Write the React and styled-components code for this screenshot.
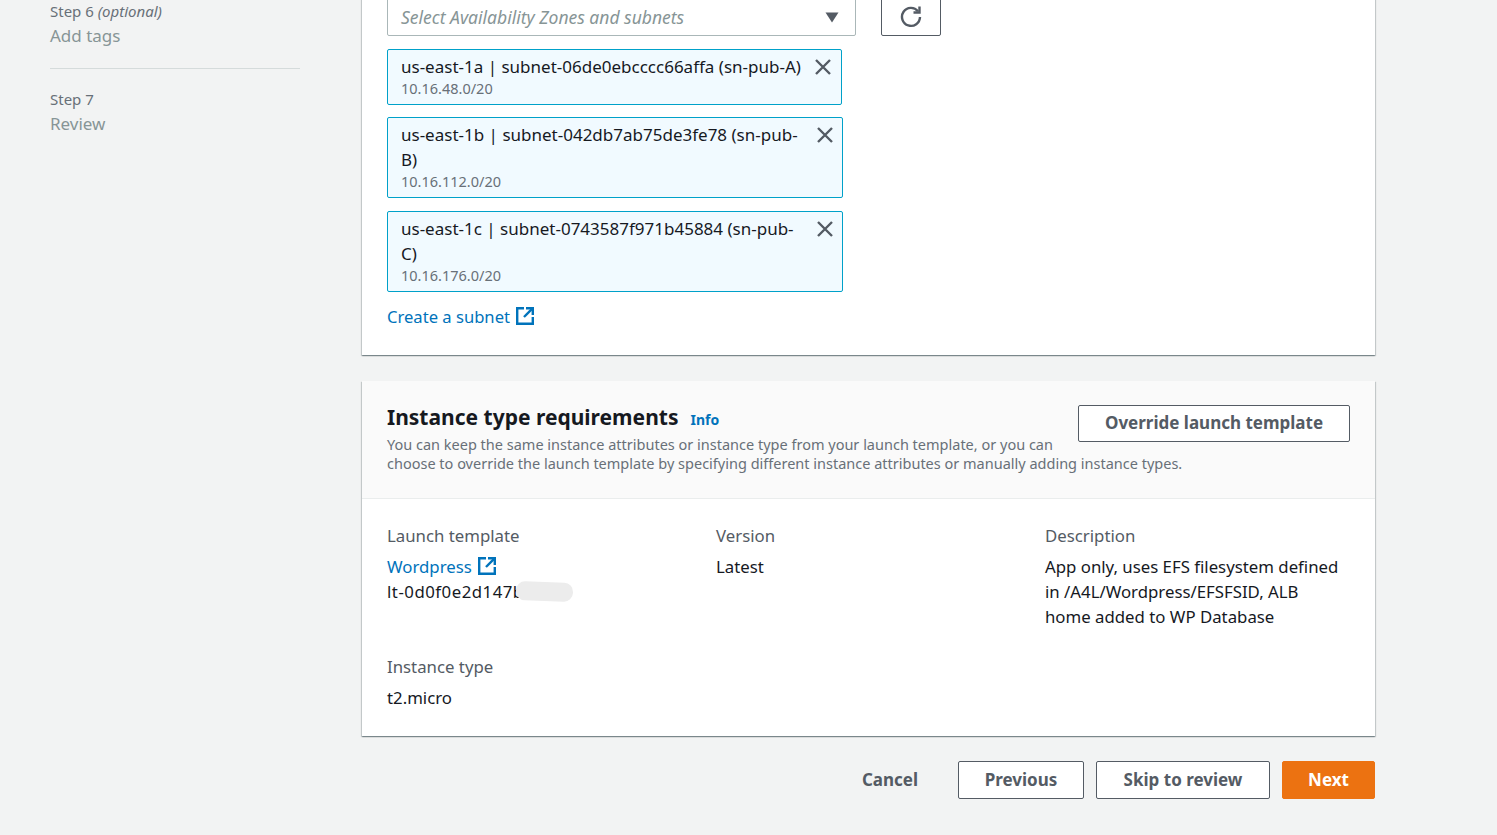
import React from 'react'
import styled, { createGlobalStyle } from 'styled-components'

const GlobalStyle = createGlobalStyle`
  html, body { margin: 0; padding: 0; background: #f2f3f3; }
  body { font-family: "Noto Sans", "Open Sans", sans-serif; color: #16191f; }
`

const subnets = [
  { id: 'a', name: 'us-east-1a | subnet-06de0ebcccc66affa (sn-pub-A)', cidr: '10.16.48.0/20', width: 455, pad: 9 },
  { id: 'b', name: 'us-east-1b | subnet-042db7ab75de3fe78 (sn-pub-B)', cidr: '10.16.112.0/20', width: 456, pad: 8 },
  { id: 'c', name: 'us-east-1c | subnet-0743587f971b45884 (sn-pub-C)', cidr: '10.16.176.0/20', width: 456, pad: 8 },
]

function ExternalIcon() {
  return (
    <ExtSvg viewBox="0 0 18 18" fill="none" stroke="currentColor" strokeWidth="2.4">
      <path d="M8 1.2H1.2v15.6h15.6V10" />
      <path d="M10 1.2h6.8V8" />
      <path d="M16.8 1.2L8 10" />
    </ExtSvg>
  )
}

function CloseIcon() {
  return (
    <CloseSvg viewBox="0 0 18 18" fill="none" stroke="#545b64" strokeWidth="2.4">
      <path d="M2 2l14 14M16 2L2 16" />
    </CloseSvg>
  )
}

function App() {
  return (
    <>
      <GlobalStyle />
      <Page>
        <Sidebar>
          <Step>
            <StepLabel>Step 6 <em>(optional)</em></StepLabel>
            <StepName>Add tags</StepName>
          </Step>
          <Step>
            <StepLabel>Step 7</StepLabel>
            <StepName>Review</StepName>
          </Step>
        </Sidebar>
        <Main>
          <SubnetCard>
            <SelectRow>
              <Select>
                <Placeholder>Select Availability Zones and subnets</Placeholder>
                <svg width="14" height="11" viewBox="0 0 14 11"><path d="M0.5 0.5h13L7 10.5z" fill="#545b64" /></svg>
              </Select>
              <RefreshButton>
                <svg width="22" height="22" viewBox="0 0 22 22" fill="none" stroke="#545b64" strokeWidth="2.4">
                  <path d="M18 5.2A9 9 0 1 0 20 11" />
                  <path d="M19.5 0.5v6h-6" />
                </svg>
              </RefreshButton>
            </SelectRow>
            {subnets.map(s => (
              <Token key={s.id} $width={s.width} $pad={s.pad}>
                <TokenText>
                  <TokenName>{s.name}</TokenName>
                  <TokenCidr>{s.cidr}</TokenCidr>
                </TokenText>
                <CloseIcon />
              </Token>
            ))}
            <CreateLink>Create a subnet <ExternalIcon /></CreateLink>
          </SubnetCard>

          <TemplateCard>
            <CardHeader>
              <HeaderText>
                <TitleRow>
                  <Title>Instance type requirements</Title>
                  <InfoLink>Info</InfoLink>
                </TitleRow>
                <HeaderDesc>
                  You can keep the same instance attributes or instance type from your launch template, or you can<br />
                  choose to override the launch template by specifying different instance attributes or manually adding instance types.
                </HeaderDesc>
              </HeaderText>
              <OverrideButton>Override launch template</OverrideButton>
            </CardHeader>
            <CardBody>
              <Column>
                <Label>Launch template</Label>
                <Value>
                  <PlainLink>Wordpress <ExternalIcon /></PlainLink>
                  <TemplateId>lt-0d0f0e2d147b<Smudge /></TemplateId>
                </Value>
              </Column>
              <Column>
                <Label>Version</Label>
                <Value>Latest</Value>
              </Column>
              <Column>
                <Label>Description</Label>
                <Value>App only, uses EFS filesystem defined in /A4L/Wordpress/EFSFSID, ALB home added to WP Database</Value>
              </Column>
              <Column>
                <Label>Instance type</Label>
                <Value>t2.micro</Value>
              </Column>
            </CardBody>
          </TemplateCard>

          <Actions>
            <CancelButton>Cancel</CancelButton>
            <Button $width={126}>Previous</Button>
            <Button $width={174}>Skip to review</Button>
            <NextButton>Next</NextButton>
          </Actions>
        </Main>
      </Page>
    </>
  )
}

export default App

const Page = styled.div`
  height: 835px;
  overflow: hidden;
  display: grid;
  grid-template-columns: 250px 1013px;
  column-gap: 62px;
  padding-left: 50px;
`
const Sidebar = styled.nav`
  display: flex;
  flex-direction: column;
`
const Step = styled.div`
  height: 68px;
  margin-bottom: 19px;
  &:first-child {
    border-bottom: 1px solid #d5dbdb;
  }
`
const StepLabel = styled.div`
  font-size: 15px;
  line-height: 23px;
  color: #687078;
  em { font-style: italic; }
`
const StepName = styled.div`
  font-size: 17px;
  line-height: 25px;
  color: #879596;
`
const Main = styled.main`
  display: flex;
  flex-direction: column;
  margin-top: -2px;
`
const SubnetCard = styled.section`
  background: #fff;
  padding: 0 25px 25px;
  height: 357px;
  box-sizing: border-box;
  box-shadow: 0 1px 1px 0 rgba(0, 28, 36, 0.3), 1px 1px 1px 0 rgba(0, 28, 36, 0.15), -1px 1px 1px 0 rgba(0, 28, 36, 0.15);
`
const SelectRow = styled.div`
  display: flex;
  gap: 25px;
  margin-bottom: 13px;
`
const Select = styled.div`
  width: 469px;
  height: 38px;
  box-sizing: border-box;
  border: 1px solid #aab7b8;
  border-radius: 2px;
  display: flex;
  align-items: center;
  justify-content: space-between;
  padding: 0 16px 0 13px;
`
const Placeholder = styled.span`
  font-size: 17.5px;
  font-style: italic;
  color: #879596;
`
const RefreshButton = styled.div`
  width: 60px;
  height: 38px;
  box-sizing: border-box;
  border: 1px solid #545b64;
  border-radius: 2px;
  display: flex;
  align-items: center;
  justify-content: center;
`
const Token = styled.div`
  width: ${p => p.$width}px;
  box-sizing: border-box;
  display: flex;
  justify-content: space-between;
  align-items: flex-start;
  background: #f1faff;
  border: 1px solid #00a1c9;
  border-radius: 2px;
  padding: 4px ${p => p.$pad}px 6px 13px;
  margin-bottom: 12.4px;
`
const TokenText = styled.div`
  width: 402px;
`
const TokenName = styled.div`
  font-size: 17px;
  line-height: 25px;
  color: #16191f;
`
const TokenCidr = styled.div`
  font-size: 14.5px;
  line-height: 19px;
  color: #687078;
`
const CloseSvg = styled.svg`
  width: 18px;
  height: 18px;
  margin-top: 4px;
  flex-shrink: 0;
`
const ExtSvg = styled.svg`
  width: 18px;
  height: 18px;
  vertical-align: -2px;
  margin-left: 2px;
`
const CreateLink = styled.a`
  display: block;
  font-size: 16.6px;
  line-height: 25px;
  color: #0073bb;
`
const TemplateCard = styled.section`
  margin-top: 26px;
  background: #fff;
  height: 355px;
  box-shadow: 0 1px 1px 0 rgba(0, 28, 36, 0.3), 1px 1px 1px 0 rgba(0, 28, 36, 0.15), -1px 1px 1px 0 rgba(0, 28, 36, 0.15);
`
const CardHeader = styled.header`
  height: 118px;
  box-sizing: border-box;
  background: #fafafa;
  border-bottom: 1px solid #eaeded;
  padding: 24px 25px 0;
  display: flex;
  justify-content: space-between;
  align-items: flex-start;
  gap: 25px;
`
const HeaderText = styled.div`
  width: 666px;
`
const TitleRow = styled.div`
  display: flex;
  align-items: baseline;
  gap: 12px;
`
const Title = styled.h2`
  margin: 0;
  font-size: 21px;
  line-height: 25px;
  font-weight: 700;
  color: #16191f;
`
const InfoLink = styled.a`
  font-size: 14px;
  font-weight: 700;
  color: #0073bb;
`
const HeaderDesc = styled.p`
  margin: 5px 0 0;
  font-size: 14.5px;
  line-height: 19px;
  color: #687078;
  white-space: nowrap;
`
const OverrideButton = styled.button`
  flex-shrink: 0;
  width: 272px;
  height: 37px;
  padding: 0 0 2px;
  background: #fff;
  border: 1px solid #545b64;
  border-radius: 2px;
  font: 700 17px "Noto Sans", sans-serif;
  color: #545b64;
`
const CardBody = styled.div`
  display: grid;
  grid-template-columns: repeat(3, 329px);
  grid-template-rows: 131px auto;
  padding: 25px 25px 0;
`
const Column = styled.div``
const Label = styled.div`
  font-size: 16.8px;
  line-height: 24px;
  color: #545b64;
  margin-bottom: 6px;
`
const Value = styled.div`
  font-size: 16.8px;
  line-height: 25px;
  color: #16191f;
  width: 300px;
`
const PlainLink = styled.a`
  display: block;
  color: #0073bb;
`
const TemplateId = styled.div`
  position: relative;
  letter-spacing: 0.5px;
`
const Smudge = styled.span`
  position: absolute;
  left: 129px;
  top: 3px;
  width: 57px;
  height: 19px;
  border-radius: 9px;
  background: #ececec;
  transform: rotate(2deg);
`
const Actions = styled.div`
  margin-top: 25px;
  display: flex;
  justify-content: flex-end;
  gap: 12px;
`
const Button = styled.button`
  width: ${p => p.$width}px;
  height: 38px;
  padding: 0 0 2px;
  background: #fff;
  border: 1px solid #545b64;
  border-radius: 2px;
  font: 700 17px "Noto Sans", sans-serif;
  color: #545b64;
`
const CancelButton = styled(Button)`
  width: 84px;
  background: transparent;
  border-color: transparent;
  margin-right: 14px;
`
const NextButton = styled(Button)`
  width: 93px;
  background: #ec7211;
  border-color: #ec7211;
  color: #fff;
`
